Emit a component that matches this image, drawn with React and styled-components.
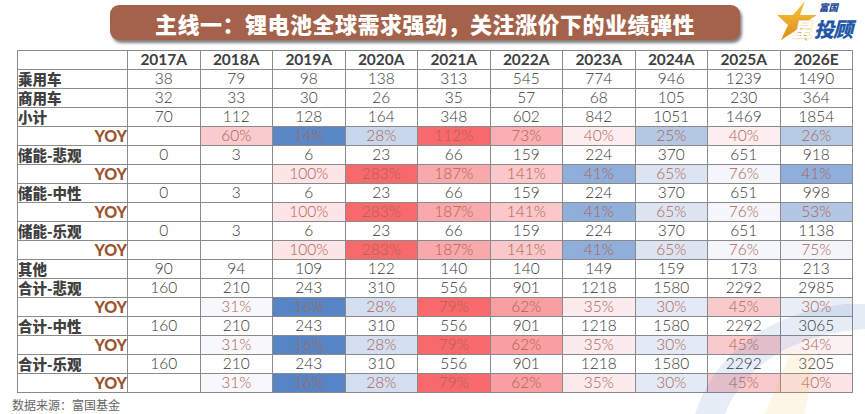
import React from 'react';
import styled, { createGlobalStyle } from 'styled-components';

const GlobalStyle = createGlobalStyle`
  html, body {
    margin: 0;
    padding: 0;
    background: #fff;
  }
  body {
    font-family: "Noto Sans CJK SC", "Noto Sans", sans-serif;
  }
`;

const Page = styled.div`
  position: relative;
  width: 865px;
  height: 414px;
  overflow: hidden;
  background: #fff;
`;

const Header = styled.div`
  display: flex;
  align-items: flex-start;
  height: 50px;
  padding-left: 110px;
`;

const Banner = styled.div`
  margin-top: 5px;
  width: 630px;
  height: 35px;
  border-radius: 9px;
  background: #a5624b;
  box-shadow: 2px 3px 3px rgba(0, 0, 0, 0.5);
  display: flex;
  align-items: center;
  justify-content: center;
  color: #fff;
  font-size: 22px;
  font-weight: 900;
  letter-spacing: 0.5px;
  line-height: 1;
`;

const Logo = styled.div`
  position: relative;
  margin-left: auto;
  margin-right: 4px;
  width: 84px;
  height: 42px;
`;

const LogoSmall = styled.span`
  position: absolute;
  left: 42px;
  top: 3px;
  font-size: 9.5px;
  font-weight: 900;
  font-style: italic;
  color: #1f4e96;
  line-height: 1;
`;

const LogoBig = styled.span`
  position: absolute;
  left: 37px;
  top: 19px;
  font-size: 20px;
  font-weight: 900;
  font-style: italic;
  color: #2257a6;
  line-height: 1;
  letter-spacing: -1px;
`;

const LogoStar = styled.span`
  position: absolute;
  left: 15px;
  top: 19px;
  font-size: 20px;
  font-weight: 900;
  font-style: italic;
  color: #fff;
  line-height: 1;
  text-shadow: 0 0 1px #d48a10;
`;

const Grid = styled.div`
  margin-left: 17px;
  width: 836px;
  display: grid;
  grid-template-columns: 109px repeat(10, 71.5px);
  grid-auto-rows: 18px;
  gap: 1px;
  background: #8a8a8a;
  border: 1px solid #8a8a8a;
  box-sizing: border-box;
`;

const Cell = styled.div`
  background: ${(p) => p.$bg || '#fff'};
  display: flex;
  align-items: center;
  justify-content: center;
  font-family: Lato, "Noto Sans", sans-serif;
  font-size: 15.5px;
  font-weight: 300;
  color: ${(p) => (p.$pct ? '#ad6450' : '#383838')};
  line-height: 1;
  white-space: nowrap;
`;

const HeadCell = styled(Cell)`
  font-weight: 700;
  font-size: 15.5px;
  color: #404040;
`;

const LabelCell = styled(Cell)`
  justify-content: ${(p) => (p.$yoy ? 'flex-end' : 'flex-start')};
  font-family: ${(p) => (p.$yoy ? 'Lato, "Noto Sans", sans-serif' : '"Noto Sans CJK SC", sans-serif')};
  font-weight: 900;
  font-size: ${(p) => (p.$yoy ? '16px' : '14.5px')};
  color: ${(p) => (p.$yoy ? '#9c5532' : '#404040')};
`;

const Source = styled.div`
  margin: 5px 0 0 12px;
  font-size: 12px;
  color: #666;
  line-height: 14px;
`;

const Watermark = styled.svg`
  position: absolute;
  right: 0;
  bottom: 0;
  pointer-events: none;
  opacity: 0.11;
`;

const years = ['2017A', '2018A', '2019A', '2020A', '2021A', '2022A', '2023A', '2024A', '2025A', '2026E'];

const yoyStorage = ['', '', '100%', '283%', '187%', '141%', '41%', '65%', '76%'];
const storageColors = [null, null, '#fce4e7', '#f8696b', '#f9a9ac', '#fac7ca', '#8faeda', '#dce4f1', '#f4f6fb'];
const yoyTotal = ['', '31%', '16%', '28%', '79%', '62%', '35%', '30%', '45%'];
const totalColors = [null, '#f8f8fc', '#5585c5', '#d3def0', '#f8696b', '#f99ea1', '#fcebee', '#e4eaf5', '#f9cacd'];

const rows = [
  { label: '乘用车', values: [38, 79, 98, 138, 313, 545, 774, 946, 1239, 1490] },
  { label: '商用车', values: [32, 33, 30, 26, 35, 57, 68, 105, 230, 364] },
  { label: '小计', values: [70, 112, 128, 164, 348, 602, 842, 1051, 1469, 1854] },
  {
    yoy: true,
    values: ['', '60%', '14%', '28%', '112%', '73%', '40%', '25%', '40%', '26%'],
    colors: [null, '#f8cbce', '#5a87c5', '#c9d7ec', '#f8696b', '#fab0b2', '#fcedef', '#b4c8e4', '#fcedef', '#b6cae5'],
  },
  { label: '储能-悲观', values: [0, 3, 6, 23, 66, 159, 224, 370, 651, 918] },
  { yoy: true, values: [...yoyStorage, '41%'], colors: [...storageColors, '#8faeda'] },
  { label: '储能-中性', values: [0, 3, 6, 23, 66, 159, 224, 370, 651, 998] },
  { yoy: true, values: [...yoyStorage, '53%'], colors: [...storageColors, '#b3c6e4'] },
  { label: '储能-乐观', values: [0, 3, 6, 23, 66, 159, 224, 370, 651, 1138] },
  { yoy: true, values: [...yoyStorage, '75%'], colors: [...storageColors, '#f3f5fa'] },
  { label: '其他', values: [90, 94, 109, 122, 140, 140, 149, 159, 173, 213] },
  { label: '合计-悲观', values: [160, 210, 243, 310, 556, 901, 1218, 1580, 2292, 2985] },
  { yoy: true, values: [...yoyTotal, '30%'], colors: [...totalColors, '#e8edf6'] },
  { label: '合计-中性', values: [160, 210, 243, 310, 556, 901, 1218, 1580, 2292, 3065] },
  { yoy: true, values: [...yoyTotal, '34%'], colors: [...totalColors, '#fbf1f3'] },
  { label: '合计-乐观', values: [160, 210, 243, 310, 556, 901, 1218, 1580, 2292, 3205] },
  { yoy: true, values: [...yoyTotal, '40%'], colors: [...totalColors, '#fce4e7'] },
];

const StarMark = () => (
  <svg width="44" height="42" viewBox="0 0 44 42" style={{ position: 'absolute', left: 0, top: 0 }}>
    <defs>
      <linearGradient id="gold" x1="0" y1="0" x2="0" y2="1">
        <stop offset="0" stopColor="#f7c744" />
        <stop offset="1" stopColor="#dd8a12" />
      </linearGradient>
    </defs>
    <path d="M28 1 L23 15 L40 15 L26 24 L30 41 L18 31 L4 40 L11 25 L0 15 L16 15 Z" fill="url(#gold)" />
  </svg>
);

export default function App() {
  return (
    <Page>
      <GlobalStyle />
      <Header>
        <Banner>主线一：锂电池全球需求强劲，关注涨价下的业绩弹性</Banner>
        <Logo>
          <StarMark />
          <LogoStar>星</LogoStar>
          <LogoSmall>富国</LogoSmall>
          <LogoBig>投顾</LogoBig>
        </Logo>
      </Header>
      <Grid>
        <HeadCell />
        {years.map((y) => (
          <HeadCell key={y}>{y}</HeadCell>
        ))}
        {rows.map((row, i) => (
          <React.Fragment key={i}>
            <LabelCell $yoy={row.yoy}>{row.yoy ? 'YOY' : row.label}</LabelCell>
            {row.values.map((v, j) => (
              <Cell key={j} $pct={row.yoy} $bg={row.colors && row.colors[j]}>
                {v}
              </Cell>
            ))}
          </React.Fragment>
        ))}
      </Grid>
      <Source>数据来源：富国基金</Source>
      <Watermark width="170" height="130" viewBox="0 0 170 130">
        <path d="M0 130 C20 70 70 30 150 20 L170 20 L170 45 C100 50 50 80 30 130 Z" fill="#2d62b0" />
        <path d="M70 130 L95 70 L120 70 L110 130 Z" fill="#f0b429" />
      </Watermark>
    </Page>
  );
}
